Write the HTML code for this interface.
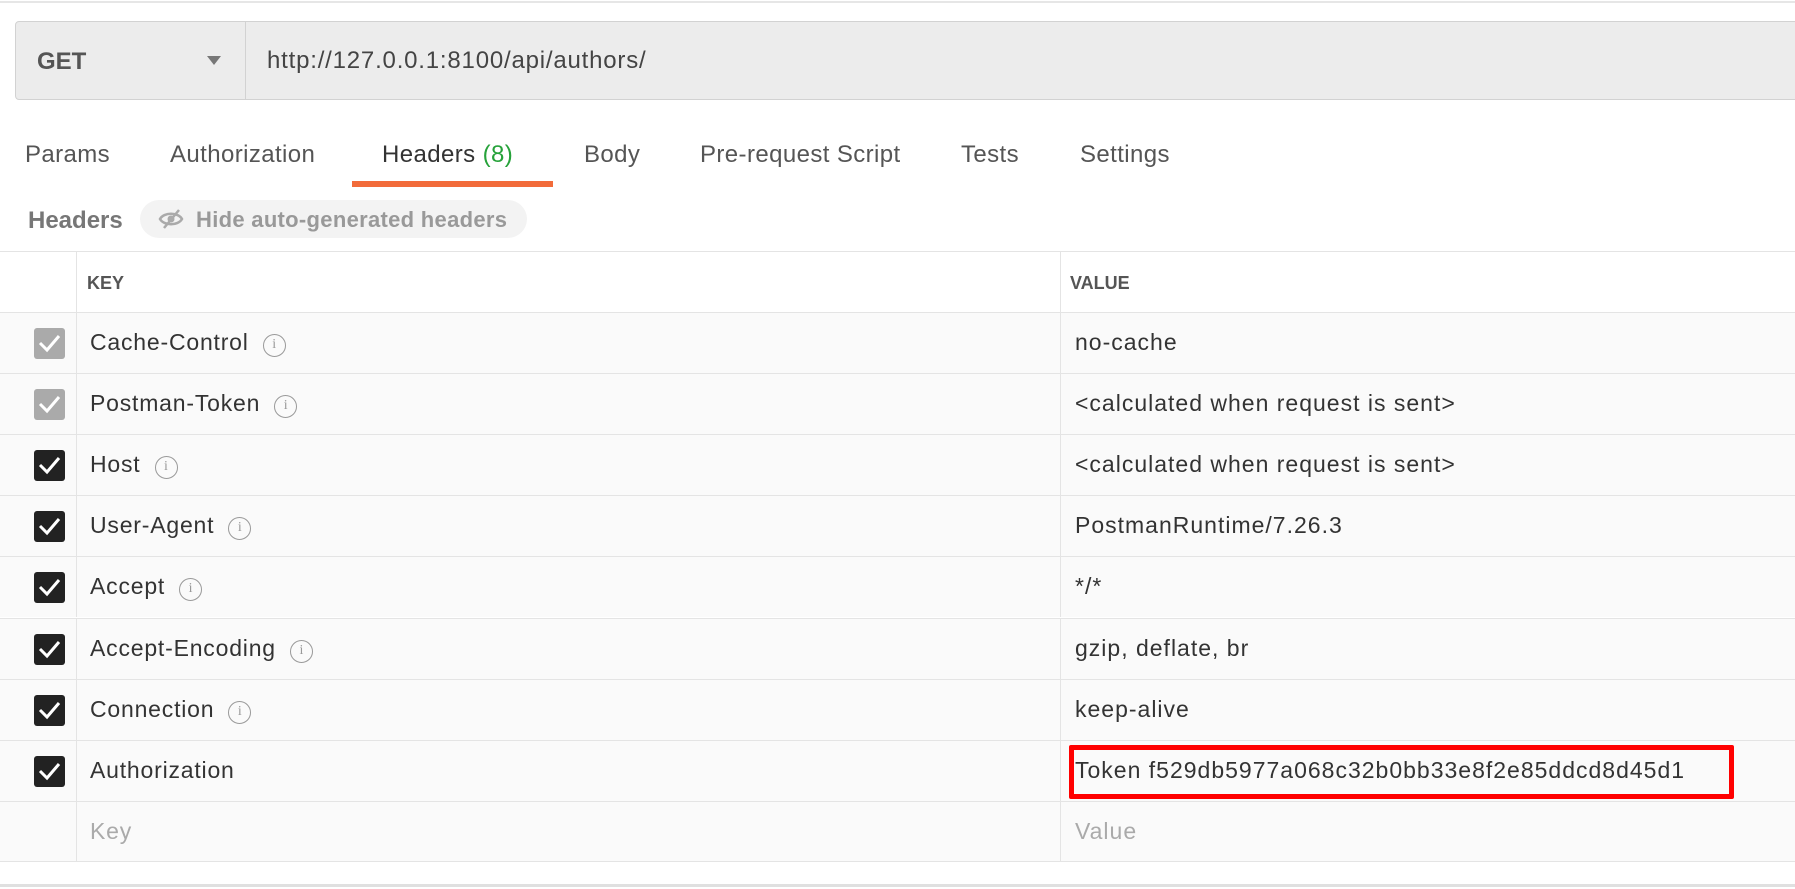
<!DOCTYPE html>
<html><head><meta charset="utf-8"><style>
*{margin:0;padding:0;box-sizing:border-box}
body{width:1795px;height:889px;background:#fff;font-family:"Liberation Sans",sans-serif;position:relative;overflow:hidden;color:#333}
.abs{position:absolute}
.tab{position:absolute;top:141px;font-size:24px;letter-spacing:0.4px;color:#555}
.row{position:absolute;left:0;width:1795px;height:61px;border-top:1px solid #e4e4e4;background:#fafafa}
.cb{position:absolute;left:34px;top:15px;width:31px;height:31px;border-radius:3px;background:#222}
.cb.g{background:#aaa}
.cb svg{position:absolute;left:4px;top:5px}
.k{position:absolute;left:90px;top:16px;font-size:23px;letter-spacing:0.8px;color:#333}
.v{position:absolute;left:1075px;top:16px;font-size:23px;letter-spacing:1px;color:#333}
.i{display:inline-block;width:23px;height:23px;border:1.5px solid #999;border-radius:50%;font-size:14px;color:#999;text-align:center;line-height:20px;margin-left:14px;vertical-align:2px;font-family:"Liberation Serif",serif;letter-spacing:0}
.cl{position:absolute;top:0;bottom:0;border-left:1px solid #e4e4e4}
</style></head><body>
<div class="abs" style="left:0;top:1px;width:1795px;height:2px;background:#e6e6e6"></div>
<div class="abs" style="left:15px;top:21px;width:1800px;height:79px;background:#ececec;border:1px solid #d2d2d2;border-radius:4px"></div>
<div class="abs" style="left:245px;top:22px;width:1px;height:77px;background:#d2d2d2"></div>
<div class="abs" style="left:37px;top:48px;font-size:24px;font-weight:bold;color:#555">GET</div>
<div class="abs" style="left:207px;top:56px;width:0;height:0;border-left:7px solid transparent;border-right:7px solid transparent;border-top:9px solid #777"></div>
<div class="abs" style="left:267px;top:47px;font-size:24px;letter-spacing:0.8px;color:#444">http://127.0.0.1:8100/api/authors/</div>

<div class="tab" style="left:25px">Params</div>
<div class="tab" style="left:170px">Authorization</div>
<div class="tab" style="left:382px;color:#333">Headers <span style="color:#26a23a">(8)</span></div>
<div class="tab" style="left:584px">Body</div>
<div class="tab" style="left:700px">Pre-request Script</div>
<div class="tab" style="left:961px">Tests</div>
<div class="tab" style="left:1080px">Settings</div>
<div class="abs" style="left:352px;top:181px;width:201px;height:6px;background:#f26b3a"></div>

<div class="abs" style="left:28px;top:207px;font-size:24px;font-weight:bold;color:#777">Headers</div>
<div class="abs" style="left:140px;top:200px;width:387px;height:38px;border-radius:19px;background:#f3f3f3"></div>
<svg class="abs" style="left:158px;top:208px" width="26" height="22" viewBox="0 0 26 22"><path d="M2 11 C6 4 20 4 24 11 C20 18 6 18 2 11Z" fill="none" stroke="#aaa" stroke-width="2.5"/><circle cx="13" cy="11" r="3.5" fill="#aaa"/><path d="M6 20 L21 2" stroke="#aaa" stroke-width="2.5"/></svg>
<div class="abs" style="left:196px;top:207px;font-size:22px;letter-spacing:0.3px;font-weight:bold;color:#999">Hide auto-generated headers</div>

<div class="abs" style="left:0;top:251px;width:1795px;height:61px;border-top:1px solid #e4e4e4">
<div class="cl" style="left:76px"></div><div class="cl" style="left:1060px"></div>
<div class="abs" style="left:87px;top:21px;font-size:18px;font-weight:bold;color:#555">KEY</div>
<div class="abs" style="left:1070px;top:21px;font-size:18px;font-weight:bold;color:#555">VALUE</div>
</div>

<div class="row" style="top:312px"><div class="cl" style="left:76px"></div><div class="cl" style="left:1060px"></div><div class="cb g"><svg width="23" height="20"><path d="M2 10 L9 17 L21 3" fill="none" stroke="#fff" stroke-width="3"/></svg></div><div class="k">Cache-Control<span class="i">i</span></div><div class="v">no-cache</div></div>
<div class="row" style="top:373px"><div class="cl" style="left:76px"></div><div class="cl" style="left:1060px"></div><div class="cb g"><svg width="23" height="20"><path d="M2 10 L9 17 L21 3" fill="none" stroke="#fff" stroke-width="3"/></svg></div><div class="k">Postman-Token<span class="i">i</span></div><div class="v">&lt;calculated when request is sent&gt;</div></div>
<div class="row" style="top:434px"><div class="cl" style="left:76px"></div><div class="cl" style="left:1060px"></div><div class="cb"><svg width="23" height="20"><path d="M2 10 L9 17 L21 3" fill="none" stroke="#fff" stroke-width="3"/></svg></div><div class="k">Host<span class="i">i</span></div><div class="v">&lt;calculated when request is sent&gt;</div></div>
<div class="row" style="top:495px"><div class="cl" style="left:76px"></div><div class="cl" style="left:1060px"></div><div class="cb"><svg width="23" height="20"><path d="M2 10 L9 17 L21 3" fill="none" stroke="#fff" stroke-width="3"/></svg></div><div class="k">User-Agent<span class="i">i</span></div><div class="v">PostmanRuntime/7.26.3</div></div>
<div class="row" style="top:556px"><div class="cl" style="left:76px"></div><div class="cl" style="left:1060px"></div><div class="cb"><svg width="23" height="20"><path d="M2 10 L9 17 L21 3" fill="none" stroke="#fff" stroke-width="3"/></svg></div><div class="k">Accept<span class="i">i</span></div><div class="v">*/*</div></div>
<div class="row" style="top:618px"><div class="cl" style="left:76px"></div><div class="cl" style="left:1060px"></div><div class="cb"><svg width="23" height="20"><path d="M2 10 L9 17 L21 3" fill="none" stroke="#fff" stroke-width="3"/></svg></div><div class="k">Accept-Encoding<span class="i">i</span></div><div class="v">gzip, deflate, br</div></div>
<div class="row" style="top:679px"><div class="cl" style="left:76px"></div><div class="cl" style="left:1060px"></div><div class="cb"><svg width="23" height="20"><path d="M2 10 L9 17 L21 3" fill="none" stroke="#fff" stroke-width="3"/></svg></div><div class="k">Connection<span class="i">i</span></div><div class="v">keep-alive</div></div>
<div class="row" style="top:740px"><div class="cl" style="left:76px"></div><div class="cl" style="left:1060px"></div><div class="cb"><svg width="23" height="20"><path d="M2 10 L9 17 L21 3" fill="none" stroke="#fff" stroke-width="3"/></svg></div><div class="k">Authorization</div><div class="v">Token f529db5977a068c32b0bb33e8f2e85ddcd8d45d1</div></div>
<div class="row" style="top:801px;border-bottom:1px solid #e4e4e4"><div class="cl" style="left:76px"></div><div class="cl" style="left:1060px"></div><div class="k" style="color:#aaa">Key</div><div class="v" style="color:#aaa">Value</div></div>
<div class="abs" style="left:1069px;top:745px;width:665px;height:54px;border:5px solid #f00;border-radius:2px"></div>
<div class="abs" style="left:0;top:884px;width:1795px;height:3px;background:#e0e0e0"></div>
</body></html>
